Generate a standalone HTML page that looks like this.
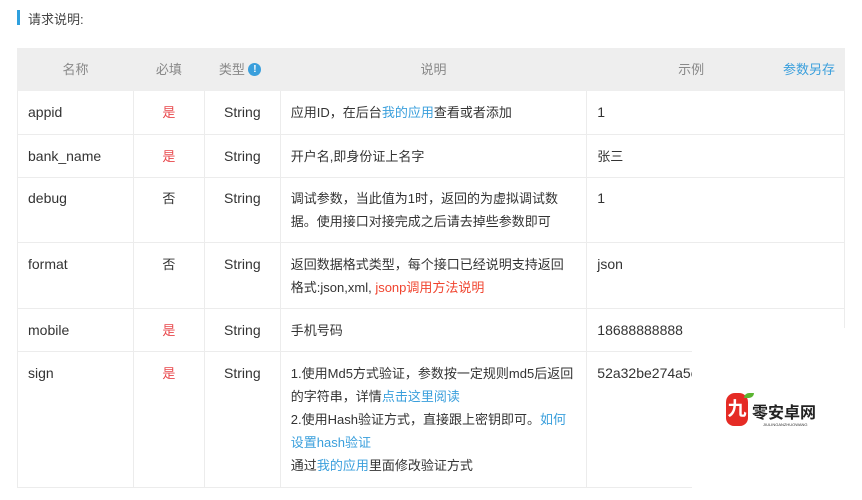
<!DOCTYPE html>
<html><head><meta charset="utf-8"><style>
*{margin:0;padding:0;box-sizing:border-box}
body{width:862px;height:500px;background:#fff;position:relative;overflow:hidden;font-family:"Liberation Sans","Noto Sans CJK SC",sans-serif;font-size:13px;color:#333}
.t{position:absolute}
table{position:absolute;left:17px;top:48px;width:828px;border-collapse:collapse}
td,th{border:1px solid #ececec;vertical-align:top;padding:0 10px;line-height:23px}
th{background:#eeeeee;font-weight:normal;color:#888;height:42px;vertical-align:middle;border-color:#eee;font-size:13px}
.c{text-align:center}
.s{font-size:14px}
.r{color:#e8474b}
.b{color:#3a9fdc}
.o{color:#f0442f}
</style></head><body>
<div class="t" style="left:17px;top:10px;width:3px;height:15px;background:#2ea0de"></div>
<div class="t" style="left:28px;top:9px;font-size:13px;color:#444">请求说明:</div>
<table>
<colgroup><col style="width:116px"><col style="width:71px"><col style="width:76px"><col style="width:307px"><col style="width:258px"></colgroup>
<tr><th>名称</th><th>必填</th><th style="text-align:left;padding-left:14px">类型 <span style="display:inline-block;width:13px;height:13px;border-radius:50%;background:#3a9fdc;color:#fff;font-size:10px;line-height:13px;text-align:center;vertical-align:2px;font-weight:bold">!</span></th><th>说明</th><th><span style="margin-left:78px;position:relative;left:-38px">示例</span><span class="b" style="float:right;margin-right:-1px">参数另存</span></th></tr>
<tr style="height:44px"><td class="s" style="padding-top:10px">appid</td><td class="c r" style="padding-top:10px">是</td><td class="c s" style="padding-top:10px">String</td><td style="padding-top:10px">应用ID，在后台<span class="b">我的应用</span>查看或者添加</td><td class="s" style="padding-top:10px">1</td></tr>
<tr style="height:43px"><td class="s" style="padding-top:10px">bank_name</td><td class="c r" style="padding-top:10px">是</td><td class="c s" style="padding-top:10px">String</td><td style="padding-top:10px">开户名,即身份证上名字</td><td style="padding-top:10px">张三</td></tr>
<tr style="height:65px"><td class="s" style="padding-top:9px">debug</td><td class="c" style="padding-top:9px">否</td><td class="c s" style="padding-top:9px">String</td><td style="padding-top:9px">调试参数，当此值为1时，返回的为虚拟调试数据。使用接口对接完成之后请去掉些参数即可</td><td class="s" style="padding-top:9px">1</td></tr>
<tr style="height:66px"><td class="s" style="padding-top:10px">format</td><td class="c" style="padding-top:10px">否</td><td class="c s" style="padding-top:10px">String</td><td style="padding-top:10px">返回数据格式类型，每个接口已经说明支持返回格式:json,xml, <span class="o">jsonp调用方法说明</span></td><td class="s" style="padding-top:10px">json</td></tr>
<tr style="height:43px"><td class="s" style="padding-top:10px">mobile</td><td class="c r" style="padding-top:10px">是</td><td class="c s" style="padding-top:10px">String</td><td style="padding-top:10px">手机号码</td><td class="s" style="padding-top:10px">18688888888</td></tr>
<tr style="height:136px"><td class="s" style="padding-top:10px">sign</td><td class="c r" style="padding-top:10px">是</td><td class="c s" style="padding-top:10px">String</td><td style="padding-top:10px">1.使用Md5方式验证，参数按一定规则md5后返回的字符串，详情<span class="b">点击这里阅读</span><br>2.使用Hash验证方式，直接跟上密钥即可。<span class="b">如何设置hash验证</span><br>通过<span class="b">我的应用</span>里面修改验证方式</td><td class="s" style="padding-top:10px;white-space:nowrap">52a32be274a5c</td></tr>
</table>
<div class="t" style="left:692px;top:328px;width:170px;height:172px;background:#fff"></div>
<div class="t" style="left:726px;top:393px;width:22px;height:33px;background:#e52b25;border-radius:9px 9px 8px 8px;color:#fff;font-size:19px;line-height:33px;text-align:center;font-weight:bold">九</div>
<div class="t" style="left:744px;top:393px;width:10px;height:5px;background:#5bb531;border-radius:5px 0"></div>
<div class="t" style="left:752px;top:399px;font-size:16px;font-weight:bold;color:#222">零安卓网</div>
<div class="t" style="left:763px;top:422px;font-size:4px;color:#333">JIULINGANZHUOWANG</div>
</body></html>
